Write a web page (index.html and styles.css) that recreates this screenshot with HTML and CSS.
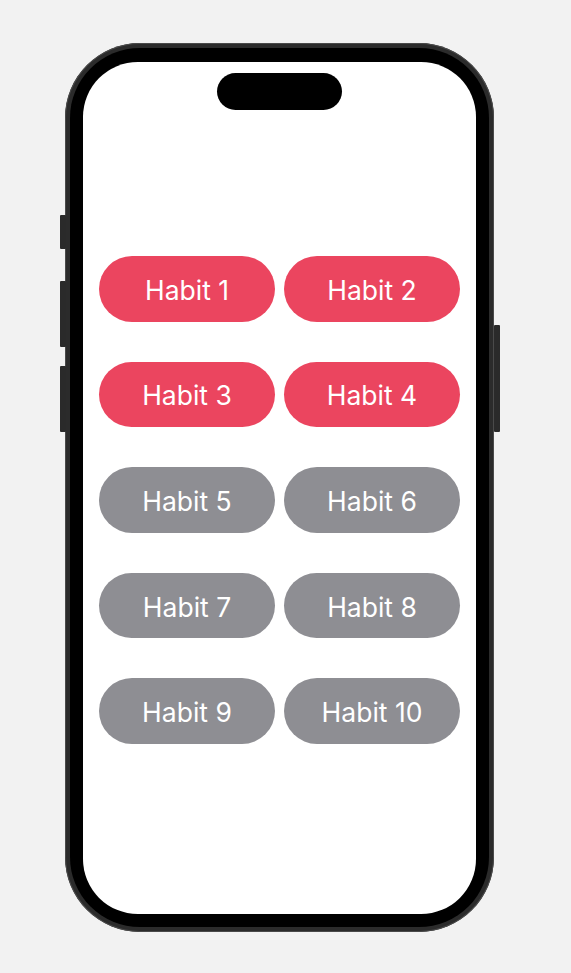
FILE: index.html
```html
<!DOCTYPE html>
<html lang="en">
<head>
<meta charset="utf-8">
<title>Habits</title>
<link rel="stylesheet" href="styles.css">
</head>
<body>
<div class="stage">
  <div class="phone">
    <span class="side-btn action"></span>
    <span class="side-btn vol-up"></span>
    <span class="side-btn vol-down"></span>
    <span class="side-btn power"></span>
    <div class="bezel">
      <div class="screen">
        <div class="island"></div>
        <div class="habits">
          <button class="habit done">Habit 1</button>
          <button class="habit done">Habit 2</button>
          <button class="habit done">Habit 3</button>
          <button class="habit done">Habit 4</button>
          <button class="habit">Habit 5</button>
          <button class="habit">Habit 6</button>
          <button class="habit">Habit 7</button>
          <button class="habit">Habit 8</button>
          <button class="habit">Habit 9</button>
          <button class="habit">Habit 10</button>
        </div>
      </div>
    </div>
  </div>
</div>
</body>
</html>
```
FILE: styles.css
```css
* { box-sizing: border-box; }
html, body {
  margin: 0;
  padding: 0;
  background: #f2f2f2;
}
body {
  width: 571px;
  height: 973px;
  overflow: hidden;
  font-family: Inter, "Noto Sans", sans-serif;
}
.stage {
  padding: 43px 0 0 65px;
}
.phone {
  position: relative;
  width: 429px;
  height: 889px;
  border-radius: 75px;
  background: #2b2b2b;
  box-shadow: inset 0 0 0 1px #4a4a4a;
  padding: 5px;
}
.side-btn {
  position: absolute;
  width: 6px;
  background: #2a2a2a;
  border-radius: 1px;
}
.action { left: -5.5px; top: 172px; height: 34px; }
.vol-up { left: -5.5px; top: 238px; height: 66px; }
.vol-down { left: -5.5px; top: 323px; height: 66px; }
.power { right: -5.5px; top: 282px; height: 107px; }
.bezel {
  height: 100%;
  background: #000;
  border-radius: 70px;
  padding: 14px 13px 13px 13px;
}
.screen {
  position: relative;
  height: 100%;
  background: #fff;
  border-radius: 55px;
  padding: 194px 16px 0 16px;
  overflow: hidden;
}
.island {
  position: absolute;
  top: 11px;
  left: 50%;
  width: 125px;
  height: 37px;
  margin-left: -62.5px;
  background: #000;
  border-radius: 19px;
}
.habits {
  display: grid;
  grid-template-columns: 1fr 1fr;
  column-gap: 9px;
  row-gap: 40px;
}
.habit {
  height: 65.6px;
  border: none;
  border-radius: 33px;
  background: #8e8e93;
  color: #fff;
  font-family: Inter, "Noto Sans", sans-serif;
  font-size: 26.5px;
  font-weight: 400;
  padding: 2px 0 0 0;
}
.habit.done {
  background: #eb455f;
}
```
